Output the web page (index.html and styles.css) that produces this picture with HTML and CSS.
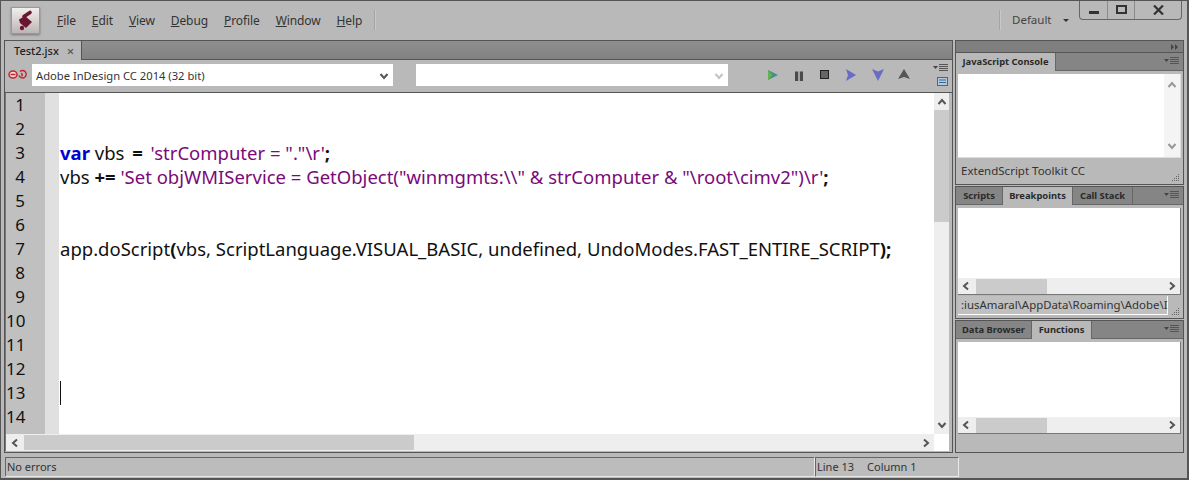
FILE: index.html
```html
<!DOCTYPE html>
<html lang="en">
<head>
<meta charset="utf-8">
<title>ExtendScript Toolkit CC</title>
<link rel="stylesheet" href="styles.css">
</head>
<body>
<svg class="defs" width="0" height="0">
  <symbol id="left" viewBox="0 0 10 10"><path d="M7 1.500 3 5l4 3.500" fill="none" stroke="#555" stroke-width="2"/></symbol>
  <symbol id="right" viewBox="0 0 10 10"><path d="M3 1.500 7 5 3 8.500" fill="none" stroke="#555" stroke-width="2"/></symbol>
  <symbol id="up" viewBox="0 0 10 10"><path d="M1.500 7 5 3l3.500 4" fill="none" stroke="#555" stroke-width="2"/></symbol>
  <symbol id="down" viewBox="0 0 10 10"><path d="M1.500 3 5 7l3.500-4" fill="none" stroke="#555" stroke-width="2"/></symbol>
  <symbol id="menu" viewBox="0 0 15 9"><path d="M0 2h5L2.500 5z" fill="#444"/><path d="M6 .5h9M6 2.500h9M6 4.500h9M6 6.500h9" stroke="#555" stroke-width="1"/></symbol>
  <symbol id="grip" viewBox="0 0 10 10"><path d="M8 1h1v1H8zM6 3h1v1H6zM8 3h1v1H8zM4 5h1v1H4zM6 5h1v1H6zM8 5h1v1H8zM2 7h1v1H2zM4 7h1v1H4zM6 7h1v1H6zM8 7h1v1H8z" fill="#666"/></symbol>
</svg>
<div class="app">
  <header class="menubar">
    <div class="logo">
      <svg width="18" height="22" viewBox="0 0 18 22"><path d="M7 7.500 13 3.500" stroke="#6b1630" stroke-width="3.600" stroke-linecap="round"/><path d="M2 10.500 8 7l7 6-6 6-6-5z" fill="#6b1630"/><circle cx="5" cy="19" r="2.200" fill="#6b1630"/></svg>
    </div>
    <nav class="menus">
      <span class="menu"><u>F</u>ile</span>
      <span class="menu"><u>E</u>dit</span>
      <span class="menu"><u>V</u>iew</span>
      <span class="menu"><u>D</u>ebug</span>
      <span class="menu"><u>P</u>rofile</span>
      <span class="menu"><u>W</u>indow</span>
      <span class="menu"><u>H</u>elp</span>
    </nav>
    <div class="sep"></div>
    <div class="spacer"></div>
    <div class="sep"></div>
    <div class="workspace">Default<i class="caret"></i></div>
    <div class="winbtns">
      <div class="wb wb-min"><span class="min-glyph"></span></div>
      <div class="wb wb-max"><span class="max-glyph"></span></div>
      <div class="wb wb-close">
        <svg width="11" height="10" viewBox="0 0 11 10"><path d="M1 .5 10 9.500M10 .5 1 9.500" stroke="#333" stroke-width="2.200"/></svg>
      </div>
    </div>
  </header>

  <main class="dock">
    <section class="editor">
      <div class="tabstrip">
        <div class="doc-tab">Test2.jsx<span class="close">×</span></div>
      </div>
      <div class="toolbar">
        <svg class="link" width="19" height="11" viewBox="0 0 19 11"><ellipse cx="5" cy="5.500" rx="4" ry="3.500" fill="#f3d9d9" stroke="#c0272d" stroke-width="1.500"/><path d="M2.500 5.500h5" stroke="#c0272d" stroke-width="1.500"/><path d="M12 2.500a3.700 3.700 0 1 1-1 4M13 4.500a1.300 1.300 0 0 1 .5 2.500" fill="none" stroke="#c0272d" stroke-width="1.400"/></svg>
        <div class="select sel-target">Adobe InDesign CC 2014 (32 bit)<svg class="chev" width="10" height="10"><use href="#down"/></svg></div>
        <div class="select sel-engine"><svg class="chev faint" width="10" height="10"><use href="#down"/></svg></div>
        <div class="tools">
          <svg width="12" height="12" viewBox="0 0 12 12"><path d="M1 1l10 5-10 5z" fill="#3f8f8a"/><path d="M1 1v10l4.500-5z" fill="#6ab04a"/></svg>
          <svg width="12" height="12" viewBox="0 0 12 12"><path d="M2 2.500h3.200V12H2zM6.800 2.500H10V12H6.800z" fill="#4a4a4a"/></svg>
          <svg width="12" height="12" viewBox="0 0 12 12"><rect x="1.500" y="1.500" width="8" height="8" fill="#666" stroke="#222"/></svg>
          <svg width="12" height="12" viewBox="0 0 12 12"><path d="M1 0l10 6-10 6 2-6z" fill="#6a6ac8"/></svg>
          <svg width="14" height="12" viewBox="0 0 14 12"><path d="M1 0l6 2.500L13 0 7 12z" fill="#6a6ac8"/></svg>
          <svg class="t-up" width="12" height="12" viewBox="0 0 12 12"><path d="M6 0l6 10-6-2-6 2z" fill="#555"/></svg>
        </div>
        <div class="tb-side">
          <svg width="15" height="9"><use href="#menu"/></svg>
          <svg width="11" height="9" viewBox="0 0 11 9"><rect x=".5" y=".5" width="10" height="8" fill="#b8c8d8" stroke="#2f6f9f"/><path d="M2 3h7M2 5.500h7" stroke="#2f6f9f"/></svg>
        </div>
      </div>
      <div class="code-area">
        <div class="code-row">
          <div class="gutter">
            <div>1</div><div>2</div><div>3</div><div>4</div><div>5</div><div>6</div><div>7</div><div>8</div><div>9</div><div>10</div><div>11</div><div>12</div><div>13</div><div>14</div>
          </div>
          <div class="fold"></div>
          <div class="code">
            <div class="ln"></div>
            <div class="ln"></div>
            <div class="ln"><b class="kw">var</b> vbs <b class="eq">=</b> <span class="str">'strComputer = "."\r'</span><b>;</b></div>
            <div class="ln">vbs <b>+=</b> <span class="str">'Set objWMIService = GetObject("winmgmts:\\" &amp; strComputer &amp; "\root\cimv2")\r'</span><b>;</b></div>
            <div class="ln"></div>
            <div class="ln"></div>
            <div class="ln">app.doScript<b>(</b>vbs, ScriptLanguage.VISUAL_BASIC, undefined, UndoModes.FAST_ENTIRE_SCRIPT<b>);</b></div>
            <div class="ln"></div>
            <div class="ln"></div>
            <div class="ln"></div>
            <div class="ln"></div>
            <div class="ln"></div>
            <div class="ln"><i class="cursor"></i></div>
            <div class="ln"></div>
          </div>
          <div class="vscroll">
            <svg width="10" height="10"><use href="#up"/></svg>
            <div class="vtrack"><div class="vthumb"></div></div>
            <svg width="10" height="10"><use href="#down"/></svg>
          </div>
        </div>
        <div class="hscroll h-main">
          <svg width="10" height="10"><use href="#left"/></svg>
          <div class="htrack"><div class="hthumb"></div></div>
          <svg width="10" height="10"><use href="#right"/></svg>
        </div>
      </div>
    </section>

    <aside class="side">
      <div class="collapse-strip"><svg width="8" height="6" viewBox="0 0 8 6"><path d="M0 0l3 3-3 3zM4 0l3 3-3 3z" fill="#444"/></svg></div>
      <section class="group g-console">
        <div class="ptabs">
          <div class="ptab on t-console">JavaScript Console</div>
          <svg class="pmenu" width="15" height="9"><use href="#menu"/></svg>
        </div>
        <div class="pbody">
          <div class="box console-box">
            <div class="console-scroll">
              <svg width="10" height="10"><use href="#up"/></svg>
              <svg width="10" height="10"><use href="#down"/></svg>
            </div>
          </div>
          <div class="pfoot">ExtendScript Toolkit CC<svg class="grip" width="10" height="10"><use href="#grip"/></svg></div>
        </div>
      </section>
      <section class="group g-scripts">
        <div class="ptabs">
          <div class="ptab t-scripts">Scripts</div>
          <div class="ptab on t-break">Breakpoints</div>
          <div class="ptab t-calls">Call Stack</div>
          <svg class="pmenu" width="15" height="9"><use href="#menu"/></svg>
        </div>
        <div class="pbody">
          <div class="box scripts-box">
            <div class="hscroll">
              <svg width="10" height="10"><use href="#left"/></svg>
              <div class="htrack"><div class="hthumb small"></div></div>
              <svg width="10" height="10"><use href="#right"/></svg>
            </div>
          </div>
          <div class="pfoot path-foot"><div class="pathfield">:iusAmaral\AppData\Roaming\Adobe\I</div><svg class="grip" width="10" height="10"><use href="#grip"/></svg></div>
        </div>
      </section>
      <section class="group g-data">
        <div class="ptabs">
          <div class="ptab t-data">Data Browser</div>
          <div class="ptab on t-func">Functions</div>
          <svg class="pmenu" width="15" height="9"><use href="#menu"/></svg>
        </div>
        <div class="pbody">
          <div class="box data-box">
            <div class="hscroll">
              <svg width="10" height="10"><use href="#left"/></svg>
              <div class="htrack"><div class="hthumb small"></div></div>
              <svg width="10" height="10"><use href="#right"/></svg>
            </div>
          </div>
        </div>
      </section>
    </aside>
  </main>

  <footer class="status">
    <div class="field f-err">No errors</div>
    <div class="field f-pos"><span>Line 13</span><span>Column 1</span></div>
  </footer>
</div>
</body>
</html>
```
FILE: styles.css
```css
* { box-sizing: border-box; }
html, body { margin: 0; height: 100%; overflow: hidden; }
body { font-family: "Noto Sans", "Open Sans", sans-serif; font-size: 12px; color: #222; background: #b9b9b9; }
.defs { position: absolute; }
svg { display: block; flex: none; }

.app { width: 1189px; height: 480px; display: flex; flex-direction: column; background: #b9b9b9; border: 1px solid #555; border-width: 1px 2px 2px 1px; }

.menubar { height: 39px; display: flex; align-items: center; padding: 4px 0 0 10px; flex: none; position: relative; }
.logo { width: 29px; height: 27px; margin-top: -5px; display: flex; align-items: center; justify-content: center; background: linear-gradient(#f2eeee, #bdb5b5); border: 1px solid #999; box-shadow: 0 1px 2px #777; }
.menus { display: flex; margin-left: 17px; margin-top: -5px; }
.menu { margin-right: 16px; color: #333; letter-spacing: -.1px; }
.sep { width: 2px; height: 20px; background: #a5a5a5; margin: -5px 0 0 -4px; border-right: 1px solid #c8c8c8; }
.spacer { flex: 1; }
.workspace { width: 67px; margin-left: 11px; margin-top: -7px; font-size: 11.500px; color: #444; display: flex; align-items: center; }
.caret { width: 0; height: 0; border: 3px solid transparent; border-top-color: #333; border-bottom: 0; margin-left: 11px; margin-top: 3px; }
.winbtns { display: flex; align-self: flex-start; margin-top: -4px; margin-right: 5px; height: 19px; border: 1px solid #666; border-top: 0; border-radius: 0 0 4px 4px; }
.wb { height: 100%; display: flex; align-items: center; justify-content: center; border-right: 1px solid #8a8a8a; }
.wb-min { width: 28px; }
.wb-max { width: 27px; }
.wb-close { width: 46px; border-right: 0; }
.min-glyph { width: 10px; height: 3px; background: #333; margin-top: 5px; }
.max-glyph { width: 11px; height: 9px; border: 2px solid #333; margin-top: -2px; }

.dock { flex: 1; display: flex; padding: 0 2px 0 3px; gap: 2px; min-height: 0; }
.editor { width: 949px; height: 413px; border: 1px solid #555; display: flex; flex-direction: column; background: #b9b9b9; }
.tabstrip { height: 19px; background: linear-gradient(#8f8f8f, #828282); border-bottom: 1px solid #555; flex: none; display: flex; }
.doc-tab { width: 77px; height: 19px; background: #b9b9b9; border-right: 1px solid #555; display: flex; align-items: center; padding-left: 9px; font-size: 11px; font-weight: 500; color: #222; }
.close { margin-left: 8px; color: #555; font-size: 13px; }

.toolbar { height: 33px; flex: none; display: flex; align-items: center; padding: 0 0 2px 3px; border-bottom: 1px solid #555; }
.link { margin-right: 5px; margin-top: -1px; }
.select { height: 22px; background: #fff; display: flex; align-items: center; justify-content: space-between; padding: 1px 4px 0; font-size: 11.200px; color: #333; }
.sel-target { width: 361px; }
.sel-engine { width: 312px; margin-left: 23px; justify-content: flex-end; }
.chev { width: 10px; height: 10px; }
.faint { opacity: .35; }
.tools { display: flex; align-items: center; gap: 14px; margin-left: 39px; }
.t-up { margin-left: -1px; }
.tb-side { margin-left: auto; margin-right: 4px; display: flex; flex-direction: column; align-items: flex-end; gap: 4px; }

.code-area { flex: 1; display: flex; flex-direction: column; min-height: 0; margin: 0 3px 1px 0; background: #fff; border-left: 1px solid #777; }
.code-row { flex: 1; display: flex; min-height: 0; overflow: hidden; }
.gutter { width: 39px; background: #c0c0c0; flex: none; font-size: 17px; color: #111; padding-right: 20px; text-align: right; }
.gutter div { height: 24px; line-height: 24px; }
.fold { width: 14px; background: #e0e0e0; flex: none; }
.code { flex: 1; font-size: 18.500px; color: #111; padding-left: 1px; min-width: 0; }
.ln { height: 24px; line-height: 24px; white-space: pre; position: relative; }
.ln b { font-weight: 700; }
.ln .eq { margin: 0 3px; }
.kw { color: #0000d0; }
.str { color: #7a0a7a; }
.cursor { display: inline-block; width: 1px; height: 24px; background: #111; vertical-align: top; }
.vscroll { width: 15px; background: #eee; flex: none; display: flex; flex-direction: column; align-items: center; padding: 4px 0; }
.vtrack { flex: 1; width: 100%; padding-top: 3px; }
.vthumb { height: 112px; background: #cbcbcb; }

.hscroll { height: 16px; background: #eee; display: flex; align-items: center; padding: 0 3px; flex: none; }
.htrack { flex: 1; height: 15px; }
.hthumb { height: 15px; width: 390px; background: #cbcbcb; margin-left: 3px; }
.hthumb.small { width: 71px; margin-left: 5px; }
.h-main { height: 17px; margin-right: 15px; padding-left: 4px; }
.h-main .hthumb { margin-left: 4px; }

.side { width: 229px; height: 413px; display: flex; flex-direction: column; gap: 1px; }
.collapse-strip { height: 12px; background: #7f7f7f; border: 1px solid #555; border-bottom: 0; display: flex; justify-content: flex-end; align-items: center; padding-right: 4px; flex: none; margin-bottom: -1px; }
.group { border: 1px solid #555; display: flex; flex-direction: column; flex: none; }
.g-console { height: 133px; }
.g-scripts { height: 133px; }
.g-data { flex: 1; }
.ptabs { height: 18px; background: #858585; display: flex; flex: none; position: relative; border-bottom: 1px solid #666; }
.ptab { height: 18px; font-size: 9.400px; font-weight: 700; color: #2a2a2a; display: flex; align-items: center; justify-content: center; padding-bottom: 2px; border-right: 1px solid #666; }
.ptab.on { background: #b9b9b9; }
.t-console { width: 100px; }
.t-scripts { width: 47px; }
.t-break { width: 70px; }
.t-calls { width: 60px; }
.t-data { width: 76px; }
.t-func { width: 60px; }
.pmenu { margin: 4px 4px 0 auto; }
.pbody { flex: 1; display: flex; flex-direction: column; padding: 3px 2px 0; background: #b9b9b9; min-height: 0; }
.box { background: #fff; border: 1px solid #777; border-width: 0 1px 1px 0; flex: none; display: flex; flex-direction: column; justify-content: flex-end; }
.console-box { height: 84px; align-items: flex-end; justify-content: flex-start; border-color: #ddd; }
.console-scroll { width: 16px; flex: 1; background: #eee; display: flex; flex-direction: column; justify-content: space-between; align-items: center; padding: 6px 0; opacity: .6; }
.scripts-box { height: 87px; }
.data-box { height: 92px; }
.pfoot { flex: 1; display: flex; align-items: center; padding: 0 0 2px 3px; font-size: 11.500px; color: #333; position: relative; }
.grip { position: absolute; right: 1px; bottom: 1px; }
.path-foot { padding: 1px 0 3px; align-items: stretch; }
.pathfield { width: 210px; white-space: nowrap; border: 1px solid #fff; border-width: 0 1px 1px 0; background: #c0c0c0; padding-left: 3px; line-height: 17px; font-size: 11.400px; }

.status { height: 21px; flex: none; display: flex; padding: 0 0 0 4px; gap: 1px; font-size: 11px; }
.field { height: 19px; display: flex; align-items: center; background: #bcbcbc; border: 1px solid #666; border-width: 1px 0 0 1px; box-shadow: 1px 1px 0 #e8e8e8; padding: 0 0 2px 1px; color: #333; }
.f-err { width: 809px; }
.f-pos { width: 143px; gap: 13px; }
```
